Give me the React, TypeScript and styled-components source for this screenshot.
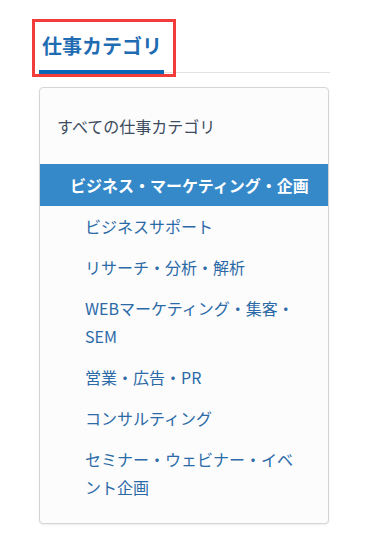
import React from 'react';
import styled, { createGlobalStyle } from 'styled-components';

const GlobalStyle = createGlobalStyle`
  html, body { margin: 0; padding: 0; background: #ffffff; }
  body { font-family: "Noto Sans CJK JP", "Noto Sans", sans-serif; }
  * { box-sizing: border-box; }
`;

const Page = styled.div`
  padding: 22px 0 16px 39px;
  width: 370px;
`;

const TabBar = styled.div`
  width: 291px;
  display: flex;
  border-bottom: 1px solid #e2e2e2;
`;

const TitleTab = styled.h2`
  position: relative;
  margin: 0 0 -2px;
  padding: 10px 2px 10px 3px;
  font-size: 20px;
  line-height: 28px;
  font-weight: 700;
  color: #1f6cb2;
  border-bottom: 4px solid #0c66b6;
`;

// red annotation box drawn over the heading
const Highlight = styled.span`
  position: absolute;
  top: -3px;
  left: -7px;
  right: -12px;
  bottom: -7px;
  border: 3px solid #f23b3b;
  pointer-events: none;
`;

const Panel = styled.nav`
  margin-top: 14px;
  width: 290px;
  background: #fcfcfd;
  border: 1px solid #d6d6d6;
  border-radius: 4px;
  box-shadow: 0 1px 2px rgba(0, 0, 0, 0.08);
  padding-bottom: 15px;
`;

const AllLink = styled.div`
  padding: 24px 16px 24px 17px;
  font-size: 16px;
  line-height: 28px;
  color: #3c4b5e;
`;

const Selected = styled.div`
  height: 42px;
  padding-left: 30px;
  background: #3589c9;
  color: #ffffff;
  font-size: 16px;
  font-weight: 700;
  line-height: 42px;
  white-space: nowrap;
`;

const SubList = styled.ul`
  list-style: none;
  margin: 0;
  padding: 0;
`;

const SubItem = styled.li`
  padding: 6px 28px 7px 45px;
  font-size: 16px;
  line-height: 28px;
  color: #2b6aa6;
`;

const subs = [
  'ビジネスサポート',
  'リサーチ・分析・解析',
  'WEBマーケティング・集客・SEM',
  '営業・広告・PR',
  'コンサルティング',
  'セミナー・ウェビナー・イベント企画',
];

export default function App() {
  return (
    <Page>
      <GlobalStyle />
      <TabBar>
        <TitleTab>
          仕事カテゴリ
          <Highlight />
        </TitleTab>
      </TabBar>

      <Panel>
        <AllLink>すべての仕事カテゴリ</AllLink>
        <Selected>ビジネス・マーケティング・企画</Selected>
        <SubList>
          {subs.map(s => (
            <SubItem key={s}>{s}</SubItem>
          ))}
        </SubList>
      </Panel>
    </Page>
  );
}
